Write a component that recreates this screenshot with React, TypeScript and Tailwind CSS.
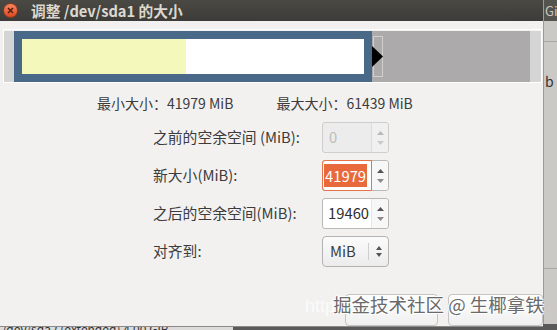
import React from "react";

const FONT = { fontFamily: '"Noto Sans CJK SC", "Noto Sans", sans-serif' };

function Arrows({ dim }: { dim?: boolean }) {
  const c = dim ? "#b9b9b9" : "#555";
  const c2 = dim ? "#c9c9c9" : "#8a8a8a";
  return (
    <div className="flex flex-col items-center justify-center gap-[6px] w-[16px] h-full">
      <svg width="7" height="4" viewBox="0 0 7 4"><path d="M0 4 L3.5 0 L7 4 Z" fill={c} /></svg>
      <svg width="7" height="4" viewBox="0 0 7 4"><path d="M0 0 L3.5 4 L7 0 Z" fill={c2} /></svg>
    </div>
  );
}

export default function App() {
  return (
    <div className="w-[557px] h-[330px] overflow-hidden flex flex-col bg-[#555]" style={FONT}>
      <div className="flex h-[324px]">
        {/* dialog */}
        <div className="w-[549px] flex flex-col relative">
          {/* title bar */}
          <div className="h-[21px] bg-gradient-to-b from-[#4b4944] to-[#3c3b37] flex items-center">
            <div className="ml-[3px] w-[15px] h-[15px] rounded-full bg-gradient-to-b from-[#f58460] to-[#e0471c] border border-[#8f3a1f] flex items-center justify-center">
              <svg width="7" height="7" viewBox="0 0 7 7"><path d="M1 1 L6 6 M6 1 L1 6" stroke="#4a1a0c" strokeWidth="1.4" /></svg>
            </div>
            <span className="ml-[13px] text-[14.7px] font-bold text-[#dcd8cf] leading-[21px]">调整 /dev/sda1 的大小</span>
          </div>
          {/* body */}
          <div className="flex-1 bg-[#f2f1f0] flex flex-col border-b border-[#8a8a8a]">
            {/* partition bar */}
            <div className="mt-[8px] ml-[3px] w-[539px] h-[54px] border border-white flex pt-[1px]">
              <div className="w-[10px] bg-[#d5d5d5]" />
              <div className="w-[358px] bg-[#4a6988] p-[8px] flex">
                <div className="flex-1 bg-white flex">
                  <div className="w-[164px] bg-[#f5f8bb]" />
                </div>
              </div>
              <div className="w-[158px] bg-[#acaaab] relative">
                <div className="absolute left-[1px] top-[5px] w-[10px] h-[41px] border border-[#cfcfcf]" />
                <svg className="absolute left-0 top-[15px]" width="11" height="21" viewBox="0 0 11 21"><path d="M0 0 L11 10.5 L0 21 Z" fill="#000" /></svg>
              </div>
              <div className="w-[11px] bg-[#d5d5d5]" />
            </div>
            {/* min / max */}
            <div className="mt-[11px] h-[18px] flex items-center pl-[97px] gap-[43px] text-[14px] text-[#3c3c3c] leading-[18px]">
              <span>最小大小：41979 MiB</span>
              <span>最大大小：61439 MiB</span>
            </div>
            {/* form */}
            <div className="mt-[10px] grid grid-cols-[169px_67px] gap-y-[7px] pl-[153px] text-[14.8px] text-[#3c3c3c]">
              <div className="h-[31px] flex items-center">之前的空余空间 (MiB):</div>
              <div className="h-[31px] flex rounded-[3px] border border-[#cdcdcd] bg-[#ececec] overflow-hidden">
                <div className="flex-1 flex items-center pl-[6px] text-[#bdbdbd]">0</div>
                <div className="border-l border-[#dcdcdc] bg-[#f0f0f0]"><Arrows dim /></div>
              </div>

              <div className="h-[31px] flex items-center">新大小(MiB):</div>
              <div className="h-[31px] flex rounded-[3px] border border-[#b8b8b8] bg-white">
                <div className="flex-1 flex items-center pl-[1px] border border-[#e5734b] rounded-l-[3px] -m-[1px] mr-0">
                  <span className="bg-[#e7693c] text-white px-[1px] leading-[23px]">41979</span>
                </div>
                <div className="bg-[#f7f7f7] rounded-r-[3px]"><Arrows /></div>
              </div>

              <div className="h-[31px] flex items-center">之后的空余空间(MiB):</div>
              <div className="h-[31px] flex rounded-[3px] border border-[#b8b8b8] bg-white">
                <div className="flex-1 flex items-center pl-[5px] text-[#2e2e2e]">19460</div>
                <div className="border-l border-[#e6e6e6] bg-[#f7f7f7] rounded-r-[3px]"><Arrows /></div>
              </div>

              <div className="h-[31px] flex items-center">对齐到:</div>
              <div className="h-[31px] flex rounded-[4px] border border-[#b3b3b3] bg-gradient-to-b from-[#fbfbfb] to-[#ececec]">
                <div className="flex-1 flex items-center pl-[7px] text-[#3c3c3c]">MiB</div>
                <div className="my-[6px] w-px bg-[#cfcfcf]" />
                <div className="w-[19px] flex flex-col items-center justify-center gap-[3px]">
                  <svg width="6" height="4" viewBox="0 0 6 4"><path d="M0 4 L3 0 L6 4 Z" fill="#555" /></svg>
                  <svg width="6" height="4" viewBox="0 0 6 4"><path d="M0 0 L3 4 L6 0 Z" fill="#555" /></svg>
                </div>
              </div>
            </div>
            {/* buttons */}
            <div className="mt-[27px] flex pl-[345px] gap-[10px]">
              <div className="w-[93px] h-[32px] rounded-[4px] border border-[#c4c4c4] bg-gradient-to-b from-[#fdfdfd] to-[#f0f0f0]" />
              <div className="w-[95px] h-[32px] rounded-[4px] border border-[#c4c4c4] bg-gradient-to-b from-[#fdfdfd] to-[#f0f0f0]" />
            </div>
          </div>
          {/* watermark */}
          <div className="absolute left-[305px] top-[293px] flex items-baseline whitespace-nowrap">
            <span className="text-[18px] text-[#ffffff] opacity-70" style={{ fontFamily: '"Liberation Sans", sans-serif' }}>http</span>
            <span
              className="text-[18.5px] text-[#6a6a6a] leading-none -ml-[2px]"
              style={{ textShadow: "0 0 1px #fff, 1px 1px 0 #fff, -1px -1px 0 #fff, 1px -1px 0 #fff, -1px 1px 0 #fff" }}
            >
              掘金技术社区 @ 生椰拿铁
            </span>
          </div>
        </div>
        {/* right background strip */}
        <div className="flex-1 flex flex-col bg-[#cbc9c6] border-l border-[#9a9a9a]">
          <div className="h-[21px] bg-[#55534e] text-[#c9c6bf] text-[13px] leading-[21px] overflow-hidden pl-[1px]">Gi</div>
          <div className="h-[21px] border-b border-[#a9a7a4]" />
          <div className="mt-[32px] text-[#333] text-[14px] leading-none pl-[1px]">b</div>
          <div className="mt-[180px] border-b border-[#a9a7a4]" />
        </div>
      </div>
      {/* bottom background strip */}
      <div className="h-[6px] flex">
        <div className="w-[233px] bg-[#dcdbd9] overflow-hidden">
          <div className="text-[12px] leading-[12px] text-[#333] pl-[2px] -mt-[1px]">/dev/sda2 (extended) 4.00 GiB</div>
        </div>
        <div className="flex-1 bg-[#5a5a5a]" />
      </div>
    </div>
  );
}
